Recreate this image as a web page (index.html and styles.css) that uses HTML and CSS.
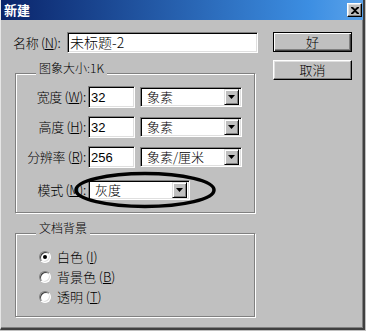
FILE: index.html
```html
<!DOCTYPE html>
<html lang="zh">
<head>
<meta charset="utf-8">
<title>新建</title>
<link rel="stylesheet" href="styles.css">
</head>
<body>
<div class="dialog">
  <div class="titlebar">
    <span class="title">新建</span>
    <span class="close"><svg width="8" height="7" viewBox="0 0 8 7"><path d="M0 0h2l2 2 2-2h2v1L5 3.5 8 6v1H6L4 5 2 7H0V6l3-2.5L0 1z" fill="#000"/></svg></span>
  </div>
  <div class="body">
    <div class="main">
      <div class="name-row">
        <span class="name-label">名称 (<u>N</u>):</span>
        <div class="field name-field">未标题-2</div>
      </div>
      <div class="group size-group">
        <div class="group-title">图象大小:1K</div>
        <div class="size-grid">
          <span class="lbl">宽度 (<u>W</u>):</span>
          <div class="field num">32</div>
          <div class="combo"><span class="combo-text">象素</span><span class="combo-btn"><svg width="7" height="4" viewBox="0 0 7 4"><path d="M0 0h7L3.5 4z" fill="#000"/></svg></span></div>

          <span class="lbl">高度 (<u>H</u>):</span>
          <div class="field num">32</div>
          <div class="combo"><span class="combo-text">象素</span><span class="combo-btn"><svg width="7" height="4" viewBox="0 0 7 4"><path d="M0 0h7L3.5 4z" fill="#000"/></svg></span></div>

          <span class="lbl">分辨率 (<u>R</u>):</span>
          <div class="field num">256</div>
          <div class="combo"><span class="combo-text">象素/厘米</span><span class="combo-btn"><svg width="7" height="4" viewBox="0 0 7 4"><path d="M0 0h7L3.5 4z" fill="#000"/></svg></span></div>

          <span class="lbl lbl-mode">模式 (<u>M</u>):</span>
          <div class="combo combo-mode"><span class="combo-text">灰度</span><span class="combo-btn"><svg width="7" height="4" viewBox="0 0 7 4"><path d="M0 0h7L3.5 4z" fill="#000"/></svg></span></div>
        </div>
        <svg class="ellipse" width="144" height="38" viewBox="0 0 144 38"><ellipse cx="72" cy="19" rx="69" ry="16.5" fill="none" stroke="#000" stroke-width="3.5"/></svg>
      </div>
      <div class="group bg-group">
        <div class="group-title">文档背景</div>
        <div class="radios">
          <div class="radio-row"><span class="radio checked"></span><span>白色 (<u>I</u>)</span></div>
          <div class="radio-row"><span class="radio"></span><span>背景色 (<u>B</u>)</span></div>
          <div class="radio-row"><span class="radio"></span><span>透明 (<u>T</u>)</span></div>
        </div>
      </div>
    </div>
    <div class="buttons">
      <div class="btn btn-default">好</div>
      <div class="btn">取消</div>
    </div>
  </div>
</div>
</body>
</html>
```
FILE: styles.css
```css
* { box-sizing: border-box; }
html, body { margin: 0; background: #c0c0c0; }
body {
  font-family: "Noto Sans CJK SC", "Liberation Sans", sans-serif;
  font-weight: 300;
  color: #000;
}
u { text-underline-offset: 1px; }
.dialog {
  width: 365px;
  height: 330px;
  background: #c0c0c0;
  border-left: 1px solid #e6e6e6;
  border-right: 2px solid #404040;
  border-bottom: 2px solid #404040;
  box-shadow: inset -1px -1px 0 #808080;
}
.titlebar {
  height: 20px;
  background: linear-gradient(to right, #0a246a, #3c8ee2 85%, #5aa2ea);
  display: flex;
  align-items: center;
  justify-content: space-between;
  padding: 0 1px 0 3px;
}
.title {
  color: #fff;
  font-weight: bold;
  font-size: 13px;
  line-height: 14px;
}
.close {
  width: 15px;
  height: 14px;
  background: #c0c0c0;
  border: 1px solid;
  border-color: #fff #000 #000 #fff;
  box-shadow: inset -1px -1px 0 #808080, inset 1px 1px 0 #dfdfdf;
  display: flex;
  align-items: center;
  justify-content: center;
}
.close svg { display: block; }
.body {
  display: flex;
  padding: 12px 0 0 12px;
}
.main { width: 246px; }
.name-row {
  display: flex;
  align-items: center;
  height: 21px;
}
.name-label {
  width: 54px;
  font-size: 13px;
  line-height: 16px;
  letter-spacing: -0.3px;
}
.field {
  background: #fff;
  border: 1px solid;
  border-color: #808080 #fff #fff #808080;
  box-shadow: inset 1px 1px 0 #000, inset -1px -1px 0 #dfdfdf;
  padding: 2px 2px;
  font-size: 13px;
  line-height: 15px;
  font-family: "Liberation Sans", "Noto Sans CJK SC", sans-serif;
  font-weight: 400;
}
.name-field { width: 191px; height: 21px; font-size: 14px; font-family: "Noto Sans CJK SC", sans-serif; font-weight: 300; }
.num { height: 22px; padding-top: 3px; }
.group {
  position: relative;
  margin: 20px 0 0 2px;
  width: 240px;
  border: 1px solid #808080;
  box-shadow: inset 1px 1px 0 #fff, 1px 1px 0 #fff;
}
.group-title {
  width: max-content;
  margin: -13px 0 0 20px;
  padding: 0 3px;
  background: #c0c0c0;
  font-size: 12px;
  line-height: 14px;
}
.size-grid {
  display: grid;
  grid-template-columns: 72px 47px 107px;
  grid-template-rows: 22px 22px 22px 24px;
  row-gap: 8px;
  align-items: center;
  margin-top: 11px;
  padding-bottom: 12px;
}
.lbl {
  text-align: right;
  padding-right: 2px;
  font-size: 13px;
  line-height: 16px;
  letter-spacing: -0.3px;
  white-space: nowrap;
}
.lbl-mode { align-self: end; line-height: 20px; }
.combo {
  display: flex;
  align-items: center;
  width: 102px;
  height: 20px;
  margin-left: 5px;
  background: #fff;
  border: 1px solid;
  border-color: #808080 #fff #fff #808080;
  box-shadow: inset 1px 1px 0 #000, inset -1px -1px 0 #dfdfdf;
  padding: 1px 2px 1px 2px;
}
.combo-mode {
  grid-column: 2 / span 2;
  margin-left: 0;
  align-self: end;
}
.combo-text {
  flex: 1;
  padding-left: 4px;
  font-size: 13px;
  line-height: 16px;
}
.combo-btn {
  width: 15px;
  height: 16px;
  background: #c0c0c0;
  border: 1px solid;
  border-color: #dfdfdf #000 #000 #dfdfdf;
  box-shadow: inset 1px 1px 0 #fff, inset -1px -1px 0 #808080;
  display: flex;
  align-items: center;
  justify-content: center;
}
.combo-btn svg { display: block; }
.ellipse {
  position: absolute;
  left: 57px;
  top: 97px;
}
.bg-group { margin-top: 20px; }
.radios {
  margin-top: 12px;
  padding: 0 0 9px 23px;
}
.radio-row {
  display: flex;
  align-items: center;
  height: 20px;
  font-size: 13px;
  line-height: 16px;
}
.radio {
  position: relative;
  width: 12px;
  height: 12px;
  margin-right: 6px;
  border-radius: 50%;
  background: #fff;
  border: 1px solid;
  border-color: #808080 #fff #fff #808080;
  box-shadow: inset 1px 1px 0 #404040, inset -1px -1px 0 #dfdfdf;
}
.radio.checked::after {
  content: "";
  position: absolute;
  left: 3px;
  top: 3px;
  width: 4px;
  height: 4px;
  border-radius: 50%;
  background: #000;
}
.buttons {
  margin-left: 14px;
  display: flex;
  flex-direction: column;
  gap: 8px;
}
.btn {
  width: 79px;
  height: 20px;
  display: flex;
  align-items: center;
  justify-content: center;
  font-size: 13px;
  line-height: 16px;
  background: #c0c0c0;
  border: 1px solid;
  border-color: #fff #000 #000 #fff;
  box-shadow: inset -1px -1px 0 #808080, inset 1px 1px 0 #dfdfdf;
}
.btn-default {
  border: 1px solid #000;
  box-shadow: inset 1px 1px 0 #fff, inset -1px -1px 0 #404040, inset -2px -2px 0 #808080;
}
```
